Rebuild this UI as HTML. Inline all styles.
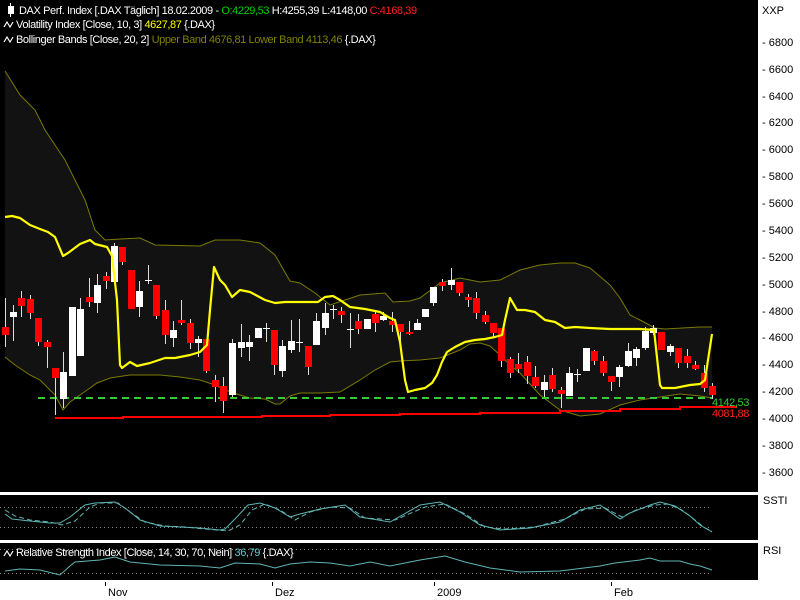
<!DOCTYPE html>
<html><head><meta charset="utf-8"><style>
html,body{margin:0;padding:0;background:#fff;}
body{width:800px;height:600px;position:relative;overflow:hidden;font-family:"Liberation Sans",sans-serif;}
svg{position:absolute;left:0;top:0;}
.lg{letter-spacing:-0.4px;}
</style></head><body>
<svg width="800" height="600" viewBox="0 0 800 600" xmlns="http://www.w3.org/2000/svg" font-family="Liberation Sans, sans-serif">
<rect x="0" y="0" width="800" height="600" fill="#fff"/>
<rect x="0" y="0" width="758" height="492" fill="#000"/>
<rect x="0" y="495" width="758" height="45" fill="#000"/>
<rect x="0" y="543" width="758" height="37" fill="#000"/>

<polygon fill="#121212" points="5,71 20,95 35,110 45,130 55,145 65,160 75,180 85,200 95,230 105,240 120,239 140,238 155,245 200,246 215,240 240,240 260,243 275,255 290,281 300,283 315,293 330,305 345,300 360,295 385,293 393,302 410,301 420,298 440,283 460,278 470,280 480,282 500,280 520,270 540,265 560,263 575,263 590,268 610,285 620,298 630,315 640,320 655,328 665,329 700,327 712,327 712,398 700,396 680,394 640,400 620,405 600,414 580,416 560,410 540,395 520,373 510,365 500,355 490,346 480,343 470,344 460,350 440,358 420,360 400,361 390,362 375,370 360,380 340,392 320,393 300,393 290,396 280,404 275,404 265,399 250,398 230,392 215,385 200,380 180,377 160,375 130,375 110,378 97,383 90,388 80,395 70,402 63,410 55,395 40,380 30,375 15,365 5,357"/>
<polyline fill="none" stroke="#7a7a00" stroke-width="1" points="5,71 20,95 35,110 45,130 55,145 65,160 75,180 85,200 95,230 105,240 120,239 140,238 155,245 200,246 215,240 240,240 260,243 275,255 290,281 300,283 315,293 330,305 345,300 360,295 385,293 393,302 410,301 420,298 440,283 460,278 470,280 480,282 500,280 520,270 540,265 560,263 575,263 590,268 610,285 620,298 630,315 640,320 655,328 665,329 700,327 712,327"/>
<polyline fill="none" stroke="#7a7a00" stroke-width="1" points="5,357 15,365 30,375 40,380 55,395 63,410 70,402 80,395 90,388 97,383 110,378 130,375 160,375 180,377 200,380 215,385 230,392 250,398 265,399 275,404 280,404 290,396 300,393 320,393 340,392 360,380 375,370 390,362 400,361 420,360 440,358 460,350 470,344 480,343 490,346 500,355 510,365 520,373 540,395 560,410 580,416 600,414 620,405 640,400 680,394 700,396 712,398"/>

<line x1="38" y1="398" x2="712" y2="398" stroke="#33cc33" stroke-width="2" stroke-dasharray="7,5"/>
<polyline fill="none" stroke="#ff0000" stroke-width="2" points="55,418 123,418 123,417 262,417 262,416 330,416 330,415 400,415 400,414 480,414 480,413 560,413 560,411 620,411 620,409 680,409 680,407 737,407"/>

<g stroke="#ddd" stroke-width="1">
<line x1="5.5" y1="298" x2="5.5" y2="347"/><line x1="13.5" y1="305" x2="13.5" y2="341"/><line x1="21.5" y1="291" x2="21.5" y2="317"/><line x1="30.5" y1="295" x2="30.5" y2="319"/><line x1="38.5" y1="318" x2="38.5" y2="346"/><line x1="47.5" y1="340" x2="47.5" y2="368"/><line x1="55.5" y1="368" x2="55.5" y2="415"/><line x1="63.5" y1="352" x2="63.5" y2="408"/><line x1="80.5" y1="298" x2="80.5" y2="356"/><line x1="89.5" y1="278" x2="89.5" y2="307"/><line x1="97.5" y1="274" x2="97.5" y2="313"/><line x1="106.5" y1="272" x2="106.5" y2="289"/><line x1="114.5" y1="243" x2="114.5" y2="284"/><line x1="122.5" y1="247" x2="122.5" y2="265"/><line x1="139.5" y1="281" x2="139.5" y2="317"/><line x1="148.5" y1="265" x2="148.5" y2="284"/><line x1="156.5" y1="285" x2="156.5" y2="319"/><line x1="165.5" y1="300" x2="165.5" y2="344"/><line x1="173.5" y1="321" x2="173.5" y2="347"/><line x1="181.5" y1="300" x2="181.5" y2="325"/><line x1="190.5" y1="319" x2="190.5" y2="349"/><line x1="198.5" y1="336" x2="198.5" y2="357"/><line x1="206.5" y1="339" x2="206.5" y2="373"/><line x1="215.5" y1="375" x2="215.5" y2="402"/><line x1="223.5" y1="377" x2="223.5" y2="413"/><line x1="232.5" y1="339" x2="232.5" y2="397"/><line x1="241.5" y1="324" x2="241.5" y2="357"/><line x1="249.5" y1="335" x2="249.5" y2="361"/><line x1="266.5" y1="323" x2="266.5" y2="342"/><line x1="274.5" y1="330" x2="274.5" y2="375"/><line x1="282.5" y1="340" x2="282.5" y2="377"/><line x1="291.5" y1="320" x2="291.5" y2="353"/><line x1="299.5" y1="319" x2="299.5" y2="352"/><line x1="308.5" y1="346" x2="308.5" y2="375"/><line x1="316.5" y1="313" x2="316.5" y2="345"/><line x1="325.5" y1="303" x2="325.5" y2="335"/><line x1="333.5" y1="305" x2="333.5" y2="319"/><line x1="341.5" y1="307" x2="341.5" y2="323"/><line x1="350.5" y1="313" x2="350.5" y2="348"/><line x1="358.5" y1="314" x2="358.5" y2="334"/><line x1="375.5" y1="312" x2="375.5" y2="332"/><line x1="383.5" y1="312" x2="383.5" y2="321"/><line x1="392.5" y1="312" x2="392.5" y2="332"/><line x1="400.5" y1="324" x2="400.5" y2="341"/><line x1="409.5" y1="321" x2="409.5" y2="335"/><line x1="417.5" y1="319" x2="417.5" y2="330"/><line x1="433.5" y1="287" x2="433.5" y2="306"/><line x1="442.5" y1="279" x2="442.5" y2="291"/><line x1="451.5" y1="268" x2="451.5" y2="290"/><line x1="459.5" y1="282" x2="459.5" y2="296"/><line x1="468.5" y1="294" x2="468.5" y2="307"/><line x1="476.5" y1="292" x2="476.5" y2="319"/><line x1="485.5" y1="311" x2="485.5" y2="324"/><line x1="493.5" y1="323" x2="493.5" y2="337"/><line x1="501.5" y1="328" x2="501.5" y2="367"/><line x1="510.5" y1="357" x2="510.5" y2="378"/><line x1="518.5" y1="353" x2="518.5" y2="373"/><line x1="527.5" y1="356" x2="527.5" y2="384"/><line x1="535.5" y1="366" x2="535.5" y2="388"/><line x1="544.5" y1="375" x2="544.5" y2="397"/><line x1="552.5" y1="368" x2="552.5" y2="392"/><line x1="561.5" y1="387" x2="561.5" y2="408"/><line x1="569.5" y1="367" x2="569.5" y2="396"/><line x1="577.5" y1="369" x2="577.5" y2="382"/><line x1="594.5" y1="350" x2="594.5" y2="365"/><line x1="603.5" y1="356" x2="603.5" y2="376"/><line x1="611.5" y1="376" x2="611.5" y2="391"/><line x1="619.5" y1="365" x2="619.5" y2="387"/><line x1="628.5" y1="343" x2="628.5" y2="367"/><line x1="636.5" y1="347" x2="636.5" y2="366"/><line x1="645.5" y1="327" x2="645.5" y2="350"/><line x1="653.5" y1="325" x2="653.5" y2="335"/><line x1="670.5" y1="344" x2="670.5" y2="356"/><line x1="678.5" y1="348" x2="678.5" y2="368"/><line x1="687.5" y1="349" x2="687.5" y2="368"/><line x1="695.5" y1="361" x2="695.5" y2="370"/><line x1="704.5" y1="365" x2="704.5" y2="392"/><line x1="712.5" y1="383" x2="712.5" y2="399"/>
</g>
<g fill="#ff0000">
<rect x="2" y="327" width="7" height="8"/><rect x="18" y="298" width="7" height="8"/><rect x="27" y="299" width="7" height="14"/><rect x="35" y="318" width="7" height="24"/><rect x="44" y="342" width="7" height="5"/><rect x="52" y="368" width="7" height="10"/><rect x="86" y="297" width="7" height="5"/><rect x="103" y="276" width="7" height="5"/><rect x="119" y="247" width="7" height="15"/><rect x="128" y="270" width="7" height="39"/><rect x="153" y="285" width="7" height="31"/><rect x="162" y="310" width="7" height="25"/><rect x="178" y="320" width="7" height="3"/><rect x="187" y="323" width="7" height="20"/><rect x="203" y="339" width="7" height="32"/><rect x="212" y="380" width="7" height="7"/><rect x="220" y="386" width="7" height="15"/><rect x="271" y="330" width="7" height="35"/><rect x="305" y="346" width="7" height="21"/><rect x="338" y="311" width="7" height="4"/><rect x="355" y="321" width="7" height="8"/><rect x="372" y="314" width="7" height="9"/><rect x="389" y="321" width="7" height="4"/><rect x="397" y="324" width="7" height="8"/><rect x="406" y="332" width="7" height="2"/><rect x="439" y="282" width="7" height="4"/><rect x="456" y="282" width="7" height="11"/><rect x="465" y="297" width="7" height="3"/><rect x="473" y="298" width="7" height="15"/><rect x="482" y="315" width="7" height="7"/><rect x="490" y="323" width="7" height="10"/><rect x="498" y="328" width="7" height="33"/><rect x="507" y="359" width="7" height="14"/><rect x="515" y="364" width="7" height="5"/><rect x="524" y="362" width="7" height="14"/><rect x="532" y="377" width="7" height="9"/><rect x="549" y="375" width="7" height="14"/><rect x="558" y="390" width="7" height="4"/><rect x="591" y="351" width="7" height="10"/><rect x="600" y="361" width="7" height="12"/><rect x="608" y="376" width="7" height="6"/><rect x="658" y="332" width="7" height="18"/><rect x="675" y="348" width="7" height="15"/><rect x="684" y="356" width="7" height="7"/><rect x="692" y="365" width="7" height="4"/><rect x="701" y="373" width="7" height="15"/><rect x="709" y="386" width="7" height="9"/>
</g>
<g fill="#fff">
<rect x="10" y="312" width="7" height="5"/><rect x="60" y="372" width="7" height="27"/><rect x="69" y="307" width="7" height="69"/><rect x="77" y="309" width="7" height="47"/><rect x="94" y="285" width="7" height="18"/><rect x="111" y="246" width="7" height="36"/><rect x="136" y="291" width="7" height="16"/><rect x="145" y="280" width="7" height="1"/><rect x="170" y="330" width="7" height="8"/><rect x="195" y="339" width="7" height="4"/><rect x="229" y="343" width="7" height="52"/><rect x="238" y="342" width="7" height="6"/><rect x="246" y="342" width="7" height="5"/><rect x="255" y="328" width="7" height="10"/><rect x="263" y="328" width="7" height="1"/><rect x="279" y="346" width="7" height="25"/><rect x="288" y="341" width="7" height="9"/><rect x="296" y="342" width="7" height="1"/><rect x="313" y="321" width="7" height="24"/><rect x="322" y="313" width="7" height="15"/><rect x="330" y="309" width="7" height="1"/><rect x="347" y="329" width="7" height="1"/><rect x="364" y="319" width="7" height="10"/><rect x="380" y="316" width="7" height="4"/><rect x="414" y="323" width="7" height="7"/><rect x="422" y="309" width="7" height="8"/><rect x="430" y="287" width="7" height="16"/><rect x="448" y="280" width="7" height="5"/><rect x="541" y="382" width="7" height="8"/><rect x="566" y="373" width="7" height="23"/><rect x="574" y="374" width="7" height="1"/><rect x="583" y="348" width="7" height="23"/><rect x="616" y="367" width="7" height="10"/><rect x="625" y="351" width="7" height="15"/><rect x="633" y="349" width="7" height="9"/><rect x="642" y="331" width="7" height="17"/><rect x="650" y="328" width="7" height="5"/><rect x="667" y="346" width="7" height="6"/>
</g>

<polyline fill="none" stroke="#ffff00" stroke-width="2.2" stroke-linejoin="round" points="5,217 12,216 20,218 30,225 40,229 48,232 55,237 63,256 68,253 80,244 90,240 95,244 107,247 112,256 117,300 120,365 122,368 130,362 137,366 150,363 165,358 175,358 190,355 200,352 207,345 210,310 214,267 220,280 225,285 232,297 240,290 250,292 265,300 275,303 285,302 300,302 318,302 325,297 333,296 340,300 350,307 365,309 380,312 390,318 395,320 400,342 405,380 408,392 415,390 425,388 432,383 437,375 442,362 447,352 455,347 465,342 475,340 485,339 495,337 502,335 505,320 510,298 517,310 525,310 535,312 545,320 555,322 565,328 575,327 590,328 610,329 640,329 654,330 660,385 662,388 675,388 690,385 700,384 705,380 708,360 712,334"/>

<g font-size="11" fill="#fff" class="lg">
<line x1="10.5" y1="3" x2="10.5" y2="17" stroke="#fff"/><rect x="8" y="6" width="6" height="8" fill="#fff"/>
<text x="19" y="14">DAX Perf. Index [.DAX  Täglich] 18.02.2009 - <tspan fill="#00cc00">O:4229,53</tspan> H:4255,39 L:4148,00 <tspan fill="#ff2020">C:4168,39</tspan></text>
<path d="M4,27 L7,22 L10,27 L13,22" fill="none" stroke="#fff" stroke-width="1.2"/>
<text x="16" y="28">Volatility Index [Close, 10, 3] <tspan fill="#ffff00">4627,87</tspan> {.DAX}</text>
<path d="M4,42 L7,37 L10,42 L13,37" fill="none" stroke="#fff" stroke-width="1.2"/>
<text x="16" y="43">Bollinger Bands [Close, 20, 2] <tspan fill="#808000">Upper Band 4676,81 Lower Band 4113,46</tspan> {.DAX}</text>
<text x="712" y="406" fill="#33cc33">4142,53</text>
<text x="712" y="417" fill="#ff2020">4081,88</text>
</g>

<g font-size="11" fill="#000">
<text x="762" y="14">XXP</text>
<text x="762" y="46">- 6800</text><text x="762" y="73">- 6600</text><text x="762" y="100">- 6400</text><text x="762" y="126">- 6200</text><text x="762" y="153">- 6000</text><text x="762" y="180">- 5800</text><text x="762" y="207">- 5600</text><text x="762" y="234">- 5400</text><text x="762" y="261">- 5200</text><text x="762" y="288">- 5000</text><text x="762" y="315">- 4800</text><text x="762" y="341">- 4600</text><text x="762" y="368">- 4400</text><text x="762" y="395">- 4200</text><text x="762" y="422">- 4000</text><text x="762" y="449">- 3800</text><text x="762" y="476">- 3600</text>
<text x="763" y="504">SSTI</text>
<text x="763" y="554">RSI</text>
<text x="108" y="596">Nov</text><text x="275" y="596">Dez</text><text x="437" y="596">2009</text><text x="614" y="596">Feb</text>
</g>
<g stroke="#000"><line x1="105.5" y1="582" x2="105.5" y2="586"/><line x1="272.5" y1="582" x2="272.5" y2="586"/><line x1="434.5" y1="582" x2="434.5" y2="586"/><line x1="611.5" y1="582" x2="611.5" y2="586"/></g>

<g stroke="#888" stroke-dasharray="1,3"><line x1="0" y1="507.5" x2="712" y2="507.5"/><line x1="0" y1="527.5" x2="712" y2="527.5"/></g>
<polyline fill="none" stroke="#5fb5b5" points="5,514 12,519 30,521 50,523 60,523 70,517 85,505 95,503 115,502 125,508 140,520 160,526 180,527 200,528 220,530 225,529 235,519 248,505 260,503 275,508 290,517 300,514 320,509 345,505 360,517 390,522 420,505 440,502 460,512 480,525 500,530 530,528 560,522 580,510 600,505 620,519 630,513 650,505 660,502 675,506 690,516 700,525 712,532"/>
<polyline fill="none" stroke="#5fb5b5" stroke-dasharray="5,3" points="5,510 15,516 30,520 50,522 62,525 75,521 90,507 100,503 118,503 130,512 145,522 165,526 185,527 205,529 228,531 240,525 252,510 265,504 280,510 295,520 310,512 330,507 350,508 365,518 395,520 425,507 445,504 465,514 485,527 505,529 535,527 565,519 585,509 605,508 622,517 636,510 655,505 668,504 682,510 695,520 705,528 712,531"/>

<g stroke="#888" stroke-dasharray="1,3"><line x1="0" y1="549.5" x2="712" y2="549.5"/><line x1="0" y1="573.5" x2="712" y2="573.5"/></g>
<path d="M4,556 L7,551 L10,556 L13,551" fill="none" stroke="#fff" stroke-width="1.2"/>
<text x="16" y="556" font-size="11" fill="#fff" class="lg">Relative Strength Index [Close, 14, 30, 70, Nein] <tspan fill="#5fcfcf">36,79</tspan> {.DAX}</text>
<polyline fill="none" stroke="#5fb5b5" points="5,571 20,569 40,570 60,575 70,566 75,562 100,560 115,557 130,562 160,565 200,566 220,568 235,563 260,564 275,568 290,564 310,562 330,563 350,566 370,562 390,566 420,560 445,556 465,562 490,568 520,572 560,571 600,566 615,563 640,560 650,558 660,561 680,561 690,564 700,566 712,570"/>
</svg>
</body></html>
